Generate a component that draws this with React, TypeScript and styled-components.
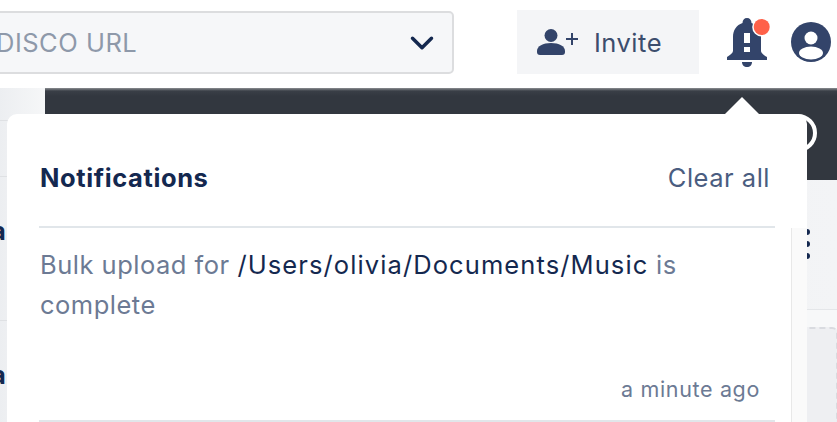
import styled, { createGlobalStyle } from "styled-components";
import { ChevronDown } from "lucide-react";

const GlobalStyle = createGlobalStyle`
  html, body {
    margin: 0;
    width: 837px;
    height: 422px;
    overflow: hidden;
    background: #fff;
    font-family: "Inter", "Liberation Sans", sans-serif;
    letter-spacing: 0.5px;
  }
`;

const Page = styled.div`
  position: relative;
  width: 837px;
  height: 422px;
  overflow: hidden;
`;

const Header = styled.header`
  height: 88px;
  display: flex;
  align-items: flex-start;
  justify-content: flex-end;
  padding: 10px 6px 0 0;
  box-sizing: border-box;
  background: #fff;
`;

const DiscoSelect = styled.div`
  flex: none;
  width: 460px;
  height: 63px;
  margin: 1px 63px 0 0;
  padding: 0 11px 0 0;
  box-sizing: border-box;
  display: flex;
  align-items: center;
  justify-content: space-between;
  background: #f6f7f9;
  border: 2px solid #dcdddf;
  border-radius: 5px;
  color: #8e99aa;
  font-size: 25.5px;
`;

const InviteButton = styled.button`
  flex: none;
  width: 182px;
  height: 64px;
  margin-right: 28px;
  padding: 0 0 0 20px;
  display: flex;
  align-items: center;
  gap: 16px;
  border: none;
  background: #f4f5f7;
  color: #3c4d6d;
  font-family: inherit;
  font-size: 25.5px;
  letter-spacing: 0.5px;
`;

const IconSlot = styled.div<{ $top: number; $right: number }>`
  flex: none;
  display: flex;
  margin-top: ${(p) => p.$top}px;
  margin-right: ${(p) => p.$right}px;
`;

const Body = styled.div`
  height: 334px;
  display: flex;
`;

const Sidebar = styled.aside`
  width: 45px;
  flex: none;
  background: linear-gradient(90deg, #eceef1, #f6f7f8);
`;

const SidebarRow = styled.div<{ $h: number }>`
  height: ${(p) => p.$h}px;
  box-sizing: border-box;
  border-bottom: 1px solid #dfe1e4;
  padding-top: ${(p) => (p.$h > 100 ? 37 : 0)}px;
  color: #14284f;
  font-size: 25.5px;
  line-height: 34px;
  font-weight: 700;
  text-indent: -9px;
  overflow: hidden;
`;

const Main = styled.main`
  flex: 1;
  display: flex;
  flex-direction: column;
`;

const DarkBar = styled.div`
  height: 92px;
  background: linear-gradient(180deg, #8b8e92 0, #3a3f47 3px, #32373f 8px);
  display: flex;
  justify-content: flex-end;
  align-items: center;
  padding: 0 20px 2px 0;
  box-sizing: border-box;
`;

const Ring = styled.div`
  width: 38px;
  height: 38px;
  box-sizing: border-box;
  border: 4px solid #fff;
  border-radius: 50%;
`;

const Content = styled.div`
  flex: 1;
  background: linear-gradient(90deg, #e8eaed, #f3f4f6);
  display: flex;
  flex-direction: column;
`;

const ContentHead = styled.div`
  height: 130px;
  flex: none;
  box-sizing: border-box;
  border-bottom: 1px solid #e4e6e9;
  display: flex;
  justify-content: flex-end;
  align-items: flex-start;
  padding: 49px 27px 0 0;
`;

const Kebab = styled.div`
  display: flex;
  flex-direction: column;
  gap: 6px;
`;

const Dot = styled.span`
  width: 6px;
  height: 6px;
  border-radius: 50%;
  background: #14284f;
`;

const ContentBody = styled.div`
  flex: 1;
  background: #f7f8f9;
  padding: 17px 0 0 18px;
  display: flex;
  justify-content: flex-end;
`;

const DashedBox = styled.div`
  width: 100%;
  margin-right: -1px;
  border-top: 2px dashed #d9dbe0;
  border-right: 2px dashed #d9dbe0;
  border-radius: 6px 6px 0 0;
  background: #eeeff2;
`;

const Popover = styled.section`
  position: absolute;
  left: 7px;
  top: 114px;
  width: 800px;
  height: 330px;
  padding: 0 32px;
  box-sizing: border-box;
  background: #fff;
  border-radius: 10px 10px 0 0;

  &::before {
    content: "";
    position: absolute;
    right: 48px;
    top: -17px;
    width: 0;
    height: 0;
    border-left: 17px solid transparent;
    border-right: 17px solid transparent;
    border-bottom: 17px solid #fff;
  }
`;

const Scrollbar = styled.div`
  position: absolute;
  right: 0;
  top: 114px;
  bottom: 0;
  width: 15px;
  background: #fafafa;
  border-left: 1px solid #e8e8e8;
`;

const PopoverHead = styled.div`
  height: 114px;
  box-sizing: border-box;
  padding-top: 47px;
  display: flex;
  justify-content: space-between;
  align-items: flex-start;
  border-bottom: 2px solid #e1e6ea;
`;

const Title = styled.h3`
  margin: 0 0 0 1px;
  font-size: 25.5px;
  line-height: 34px;
  font-weight: 700;
  letter-spacing: 0.6px;
  color: #14284f;
`;

const ClearAll = styled.span`
  margin-right: 5px;
  font-size: 25.5px;
  line-height: 34px;
  color: #4a5d80;
`;

const Item = styled.article`
  height: 194px;
  box-sizing: border-box;
  padding-top: 17px;
  border-bottom: 2px solid #e1e6ea;
`;

const Message = styled.p`
  margin: 0 0 0 1px;
  font-size: 25.5px;
  line-height: 40px;
  color: #6c7a94;
`;

const Path = styled.span`
  color: #14284f;
  letter-spacing: 1.1px;
`;

const Time = styled.div`
  margin: 50px 15px 0 0;
  text-align: right;
  font-size: 21.5px;
  line-height: 28px;
  letter-spacing: 0.65px;
  color: #6c7a94;
`;

const InviteIcon = () => (
  <svg width="41" height="26" viewBox="0 0 41 26" fill="#33446a">
    <circle cx="14" cy="6.500" r="6.500" />
    <path d="M0 22c0-5 6-8 14-8s14 3 14 8v1c0 2-1 3-3 3H3c-2 0-3-1-3-3z" />
    <path d="M29 9h5V4h2v5h5v2h-5v5h-2v-5h-5z" />
  </svg>
);

const BellIcon = () => (
  <svg width="40" height="49" viewBox="0 0 40 49" overflow="visible">
    <path
      fill="#33446a"
      d="M20 0c2.800 0 4.500 2 4.500 5 6 2 9.500 7 9.500 14v14c0 2 3 4 6 6v3H0v-3c3-2 6-4 6-6V19c0-7 3.500-12 9.500-14C15.500 2 17.200 0 20 0z"
    />
    <path fill="#33446a" d="M15 44h10c0 3-2 5-5 5s-5-2-5-5z" />
    <rect x="17" y="15" width="6" height="10" fill="#fff" />
    <rect x="17" y="29" width="6" height="5" fill="#fff" />
    <circle cx="34.700" cy="9" r="9.500" fill="#fff" />
    <circle cx="34.700" cy="9" r="8" fill="#ff6149" />
  </svg>
);

const UserIcon = () => (
  <svg width="40" height="40" viewBox="0 0 40 40">
    <circle cx="20" cy="20" r="20" fill="#33446a" />
    <circle cx="20" cy="16" r="6.500" fill="#fff" />
    <ellipse cx="20" cy="31" rx="12" ry="6.500" fill="#fff" />
  </svg>
);

export default function App() {
  return (
    <>
      <GlobalStyle />
      <Page>
        <Header>
          <DiscoSelect>
            <span>DISCO URL</span>
            <ChevronDown size={38} strokeWidth={2.2} color="#14284f" />
          </DiscoSelect>
          <InviteButton>
            <InviteIcon />
            Invite
          </InviteButton>
          <IconSlot $top={8} $right={24}>
            <BellIcon />
          </IconSlot>
          <IconSlot $top={12} $right={0}>
            <UserIcon />
          </IconSlot>
        </Header>
        <Body>
          <Sidebar>
            <SidebarRow $h={33} />
            <SidebarRow $h={56} />
            <SidebarRow $h={144}>a</SidebarRow>
            <SidebarRow $h={144}>a</SidebarRow>
          </Sidebar>
          <Main>
            <DarkBar>
              <Ring />
            </DarkBar>
            <Content>
              <ContentHead>
                <Kebab>
                  <Dot />
                  <Dot />
                  <Dot />
                </Kebab>
              </ContentHead>
              <ContentBody>
                <DashedBox />
              </ContentBody>
            </Content>
          </Main>
        </Body>
        <Popover>
          <PopoverHead>
            <Title>Notifications</Title>
            <ClearAll>Clear all</ClearAll>
          </PopoverHead>
          <Scrollbar />
          <Item>
            <Message>
              Bulk upload for <Path>/Users/olivia/Documents/Music</Path> is complete
            </Message>
            <Time>a minute ago</Time>
          </Item>
        </Popover>
      </Page>
    </>
  );
}
